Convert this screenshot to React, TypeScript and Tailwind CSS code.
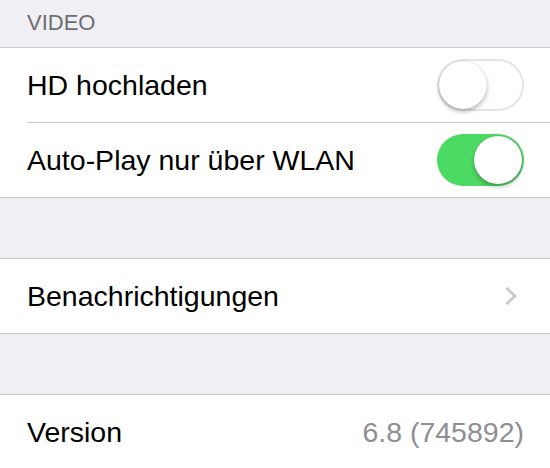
import { useState } from "react";

function Toggle({ on, onChange }: { on: boolean; onChange: () => void }) {
  return (
    <button
      onClick={onChange}
      className={`relative h-[52px] w-[87px] shrink-0 rounded-full transition-colors ${
        on ? "bg-[#4cd964]" : "bg-white shadow-[inset_0_0_0_2px_#e5e5e5]"
      }`}
    >
      <span
        className={`absolute top-[2px] h-[48px] w-[48px] rounded-full bg-white shadow-[0_3px_4px_rgba(0,0,0,0.25),0_0_1px_rgba(0,0,0,0.3)] transition-all ${
          on ? "left-[37px]" : "left-[2px]"
        }`}
      />
    </button>
  );
}

export default function App() {
  const [hd, setHd] = useState(false);
  const [autoplay, setAutoplay] = useState(true);

  return (
    <div className="h-[468px] w-[550px] overflow-hidden bg-[#efeff4] font-['Liberation_Sans',Arial,sans-serif] text-[28.5px]">
      {/* Video section */}
      <div className="h-[47px] pl-[27px] pt-[12px] text-[22px] leading-none text-[#6d6d72]">VIDEO</div>
      <div className="border-y border-[#c8c7cc] bg-white">
        <div className="flex h-[75px] items-center pl-[27px]">
          <div className="flex h-full flex-1 items-center justify-between border-b border-[#c8c7cc] pr-[26px]">
            <span className="text-black">HD hochladen</span>
            <Toggle on={hd} onChange={() => setHd(!hd)} />
          </div>
        </div>
        <div className="flex h-[74px] items-center justify-between pl-[27px] pr-[26px]">
          <span className="text-black">Auto-Play nur über WLAN</span>
          <Toggle on={autoplay} onChange={() => setAutoplay(!autoplay)} />
        </div>
      </div>

      <div className="h-[60px]" />

      {/* Notifications */}
      <div className="flex h-[76px] items-center justify-between border-y border-[#c8c7cc] bg-white pl-[27px] pr-[32px]">
        <span className="text-black">Benachrichtigungen</span>
        <svg width="14" height="20" viewBox="0 0 14 20" fill="none">
          <path d="M2.5 2l8.5 8-8.5 8" stroke="#c7c7cc" strokeWidth="2.8" />
        </svg>
      </div>

      <div className="h-[60px]" />

      {/* Version */}
      <div className="flex h-[76px] items-center justify-between border-t border-[#c8c7cc] bg-white pl-[27px] pr-[26px]">
        <span className="text-black">Version</span>
        <span className="text-[#8e8e93]">6.8 (745892)</span>
      </div>
    </div>
  );
}
